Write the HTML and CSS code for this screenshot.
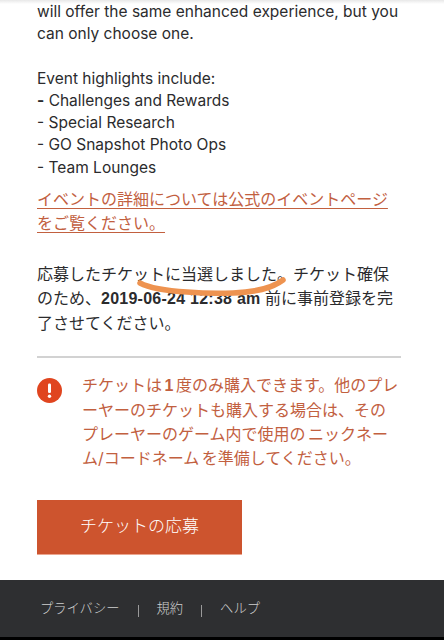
FILE: index.html
```html
<!DOCTYPE html>
<html lang="ja">
<head>
<meta charset="utf-8">
<title>チケットの応募</title>
<link rel="stylesheet" href="styles.css">
</head>
<body>
<div class="screen">
  <main class="content">
    <p class="intro">will offer the same enhanced experience, but you can only choose one.</p>
    <p class="highlights">Event highlights include:<br><span class="first-dash">-</span> Challenges and Rewards<br>- Special Research<br>- GO Snapshot Photo Ops<br>- Team Lounges</p>
    <p class="details"><a href="#">イベントの詳細については公式のイベントページをご覧ください。</a></p>
    <p class="won">応募したチケットに当選しました。チケット確保のため、<b>2019-06-24 12:38 am</b> 前に事前登録を完了させてください。</p>
    <hr class="rule">
    <div class="notice">
      <svg class="notice-icon" viewBox="0 0 25 25" aria-hidden="true"><circle cx="12.5" cy="12.5" r="12.5" fill="#e0451f"/><rect x="11" y="5.5" width="3" height="9.5" rx="1.2" fill="#fff"/><circle cx="12.5" cy="18.2" r="1.7" fill="#fff"/></svg>
      <p class="notice-text">チケットは <b>1</b> 度のみ購入できます。他のプレーヤーのチケットも購入する場合は、そのプレーヤーのゲーム内で使用の ニックネーム/コードネーム を準備してください。</p>
    </div>
    <button class="apply" type="button">チケットの応募</button>
  </main>
  <footer class="footer">
    <a href="#">プライバシー</a><span class="sep"></span><a href="#">規約</a><span class="sep"></span><a href="#">ヘルプ</a>
  </footer>
  <svg class="scribble" viewBox="0 0 150 20" aria-hidden="true"><path d="M3 6 C14 12 32 14 50 15 C68 16.5 84 16.5 96 16 C118 15 134 12 146 3" fill="none" stroke="#ee9350" stroke-width="5.5" stroke-linecap="round"/></svg>
</div>
</body>
</html>
```
FILE: styles.css
```css
* { box-sizing: border-box; }
html, body { margin: 0; padding: 0; }
body { background: #fff; }
.screen {
  position: relative;
  width: 444px;
  height: 640px;
  overflow: hidden;
  display: flex;
  flex-direction: column;
  background: linear-gradient(#e8e8e8, #fff 4px);
  font-family: "Inter", "Noto Sans CJK JP", sans-serif;
  color: #2b2b2d;
}
.content {
  flex: 1;
  padding: 1px 43px 0 37px;
  font-size: 15.5px;
  line-height: 22.3px;
}
p { margin: 0; }
.highlights { margin-top: 22px; }
.first-dash { font-weight: 700; }
.details { margin-top: 8px; font-size: 16px; line-height: 24px; }
.details a { color: #c2603f; text-decoration: underline; text-underline-offset: 3px; text-decoration-thickness: 1px; }
.won { margin-top: 27px; font-size: 16px; line-height: 24px; }
.won b { font-family: "Liberation Sans", sans-serif; font-weight: 700; letter-spacing: 0.25px; }
.rule { margin: 20.5px 0 0; border: 0; height: 2px; background: #d2d2d2; }
.notice { display: flex; margin-top: 15px; }
.notice-icon { width: 25px; height: 25px; flex: none; margin-top: 5px; }
.notice-text { margin-left: 20px; color: #c2603f; font-size: 16px; line-height: 24px; word-spacing: -2px; }
.notice-text b { font-family: "Liberation Sans", sans-serif; }
.apply {
  display: block;
  width: 205px;
  height: 55px;
  margin-top: 30px;
  padding: 0 0 4px;
  border: 0;
  border-bottom: 1px solid #eba58e;
  background: #cd542e;
  color: #fff;
  font: 300 17px "Noto Sans CJK JP", sans-serif;
}
.footer {
  height: 60px;
  flex: none;
  display: flex;
  align-items: flex-start;
  padding: 18px 0 0 40px;
  background: #2e2f31;
  border-bottom: 3px solid #000;
  font: 300 13.3px/20px "Noto Sans CJK JP", sans-serif;
}
.footer a { color: #cfcfcf; text-decoration: none; }
.sep { width: 1px; height: 12px; margin: 7px 18px 0; background: #9a9a9a; }
.scribble { position: absolute; left: 137px; top: 277px; width: 150px; height: 20px; }
```
